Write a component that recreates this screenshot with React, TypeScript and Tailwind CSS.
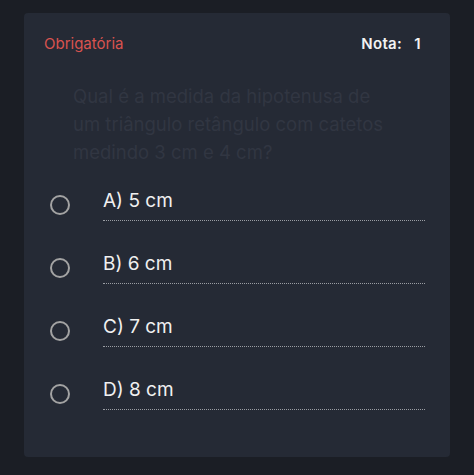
const options = ["A) 5 cm", "B) 6 cm", "C) 7 cm", "D) 8 cm"];

export default function App() {
  return (
    <div
      className="w-[474px] h-[475px] bg-[#1b1e25] pt-[13px] pl-[24px]"
      style={{ fontFamily: '"Helvetica Neue", Inter, "Liberation Sans", sans-serif' }}
    >
      <div className="w-[426px] h-[444px] bg-[#252a35] rounded-[4px]">
        <div className="flex items-center justify-between pl-[20px] pr-[29px] pt-[20px] h-[42px]">
          <span className="text-[15px] text-[#d9534f]">Obrigatória</span>
          <span className="text-[15px] text-[#f2f2f2] font-semibold tracking-[0.3px]">
            Nota:&nbsp;&nbsp;&nbsp;1
          </span>
        </div>
        <p className="pl-[49px] w-[365px] mt-[27px] text-[18.5px] leading-[28px] text-[#313642]">
          Qual é a medida da hipotenusa de um triângulo retângulo com catetos medindo 3 cm e 4 cm?
        </p>
        <div className="flex flex-col mt-[18px]">
          {options.map((o) => (
            <div key={o} className="flex items-start h-[63px]">
              <div className="w-[79px] pl-[26px] pt-[11px]">
                <div className="w-[20px] h-[20px] rounded-full border-2 border-[#a3a3a3]" />
              </div>
              <div className="flex-1 mr-[25px] pt-[4px]">
                <div className="text-[19px] leading-[26px] text-[#f0f0f0] pb-[6px]">{o}</div>
                <div className="border-b border-dotted border-[#9a9da3]" />
              </div>
            </div>
          ))}
        </div>
      </div>
    </div>
  );
}
